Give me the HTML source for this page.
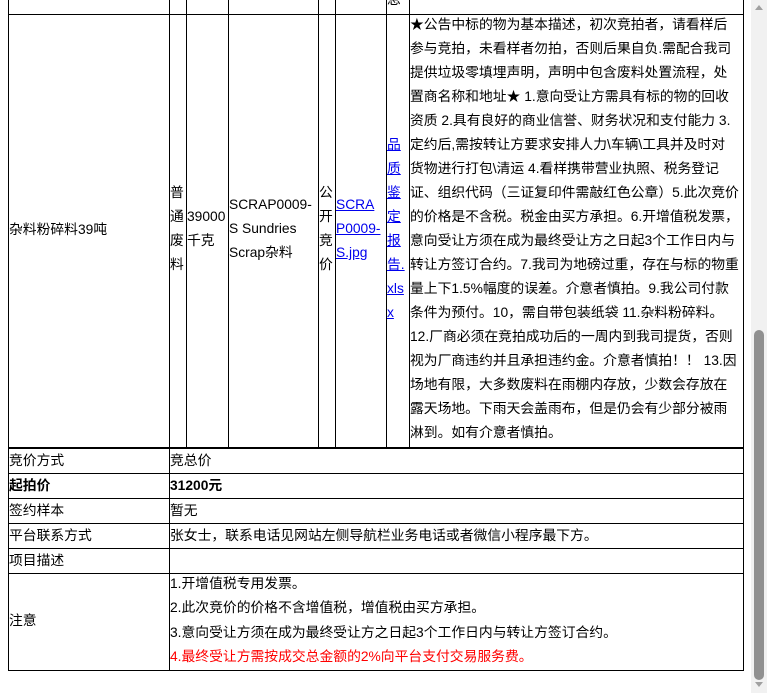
<!DOCTYPE html>
<html><head><meta charset="utf-8"><style>
html,body{margin:0;padding:0;width:767px;height:693px;overflow:hidden;background:#fff;position:relative;font-family:"Liberation Sans","Noto Sans CJK SC",sans-serif;font-size:13.8px;color:#000}
.a{position:absolute}
.v{position:absolute;width:1px;background:#000}
.h{position:absolute;height:1px;background:#000}
.t{position:absolute;line-height:24px;white-space:nowrap}
a{color:#00e;text-decoration:underline}
</style></head><body>
<div class="v" style="left:8px;top:0;height:449px"></div>
<div class="v" style="left:169px;top:0;height:449px"></div>
<div class="v" style="left:186px;top:0;height:449px"></div>
<div class="v" style="left:228px;top:0;height:449px"></div>
<div class="v" style="left:318px;top:0;height:449px"></div>
<div class="v" style="left:335px;top:0;height:449px"></div>
<div class="v" style="left:386px;top:0;height:449px"></div>
<div class="v" style="left:409px;top:0;height:449px"></div>
<div class="v" style="left:743px;top:0;height:449px"></div>
<div class="h" style="left:8px;top:14px;width:736px"></div>
<div class="t" style="left:387px;top:-12px">息</div>

<div class="t" style="left:9px;top:218px">杂料粉碎料39吨</div>
<div class="t" style="left:170px;top:181px">普<br>通<br>废<br>料</div>
<div class="t" style="left:187px;top:205px">39000<br>千克</div>
<div class="t" style="left:229px;top:193px">SCRAP0009-<br>S Sundries<br>Scrap杂料</div>
<div class="t" style="left:319px;top:181px">公<br>开<br>竞<br>价</div>
<div class="t" style="left:336px;top:193px"><a>SCRA<br>P0009-<br>S.jpg</a></div>
<div class="t" style="left:387px;top:133px"><a>品<br>质<br>鉴<br>定<br>报<br>告.<br>xls<br>x</a></div>
<div class="t" style="left:410px;top:13px">★公告中标的物为基本描述，初次竞拍者，请看样后<br>参与竞拍，未看样者勿拍，否则后果自负.需配合我司<br>提供垃圾零填埋声明，声明中包含废料处置流程，处<br>置商名称和地址★ 1.意向受让方需具有标的物的回收<br>资质 2.具有良好的商业信誉、财务状况和支付能力 3.<br>定约后,需按转让方要求安排人力\车辆\工具并及时对<br>货物进行打包\清运 4.看样携带营业执照、税务登记<br>证、组织代码（三证复印件需敲红色公章）5.此次竞价<br>的价格是不含税。税金由买方承担。6.开增值税发票，<br>意向受让方须在成为最终受让方之日起3个工作日内与<br>转让方签订合约。7.我司为地磅过重，存在与标的物重<br>量上下1.5%幅度的误差。介意者慎拍。9.我公司付款<br>条件为预付。10，需自带包装纸袋 11.杂料粉碎料。<br>12.厂商必须在竞拍成功后的一周内到我司提货，否则<br>视为厂商违约并且承担违约金。介意者慎拍！！ 13.因<br>场地有限，大多数废料在雨棚内存放，少数会存放在<br>露天场地。下雨天会盖雨布，但是仍会有少部分被雨<br>淋到。如有介意者慎拍。</div>

<div class="h" style="left:8px;top:447px;width:736px;height:2px"></div>
<div class="v" style="left:8px;top:447px;height:224px"></div>
<div class="v" style="left:169px;top:447px;height:224px"></div>
<div class="v" style="left:743px;top:447px;height:224px"></div>
<div class="h" style="left:8px;top:473px;width:736px"></div>
<div class="h" style="left:8px;top:498px;width:736px"></div>
<div class="h" style="left:8px;top:523px;width:736px"></div>
<div class="h" style="left:8px;top:548px;width:736px"></div>
<div class="h" style="left:8px;top:573px;width:736px"></div>
<div class="h" style="left:8px;top:670px;width:736px"></div>

<div class="t" style="left:9px;top:449px">竞价方式</div>
<div class="t" style="left:170px;top:449px">竞总价</div>
<div class="t" style="left:9px;top:474px;font-weight:bold">起拍价</div>
<div class="t" style="left:170px;top:474px;font-weight:bold">31200元</div>
<div class="t" style="left:9px;top:499px">签约样本</div>
<div class="t" style="left:170px;top:499px">暂无</div>
<div class="t" style="left:9px;top:524px">平台联系方式</div>
<div class="t" style="left:170px;top:524px">张女士，联系电话见网站左侧导航栏业务电话或者微信小程序最下方。</div>
<div class="t" style="left:9px;top:549px">项目描述</div>
<div class="t" style="left:9px;top:609px">注意</div>
<div class="t" style="left:170px;top:572px">1.开增值税专用发票。</div>
<div class="t" style="left:170px;top:596px">2.此次竞价的价格不含增值税，增值税由买方承担。</div>
<div class="t" style="left:170px;top:621px">3.意向受让方须在成为最终受让方之日起3个工作日内与转让方签订合约。</div>
<div class="t" style="left:170px;top:645px;color:#f00">4.最终受让方需按成交总金额的2%向平台支付交易服务费。</div>

<div class="a" style="left:751px;top:0;width:16px;height:693px;background:#f1f1f1"></div>
<div class="a" style="left:754px;top:330px;width:10px;height:350px;background:#909090;border-radius:5px"></div>
<div class="a" style="left:755px;top:5px;width:0;height:0;border-left:4px solid transparent;border-right:4px solid transparent;border-bottom:5px solid #a0a0a0"></div>
<div class="a" style="left:755px;top:682px;width:0;height:0;border-left:4px solid transparent;border-right:4px solid transparent;border-top:5px solid #a0a0a0"></div>
</body></html>
